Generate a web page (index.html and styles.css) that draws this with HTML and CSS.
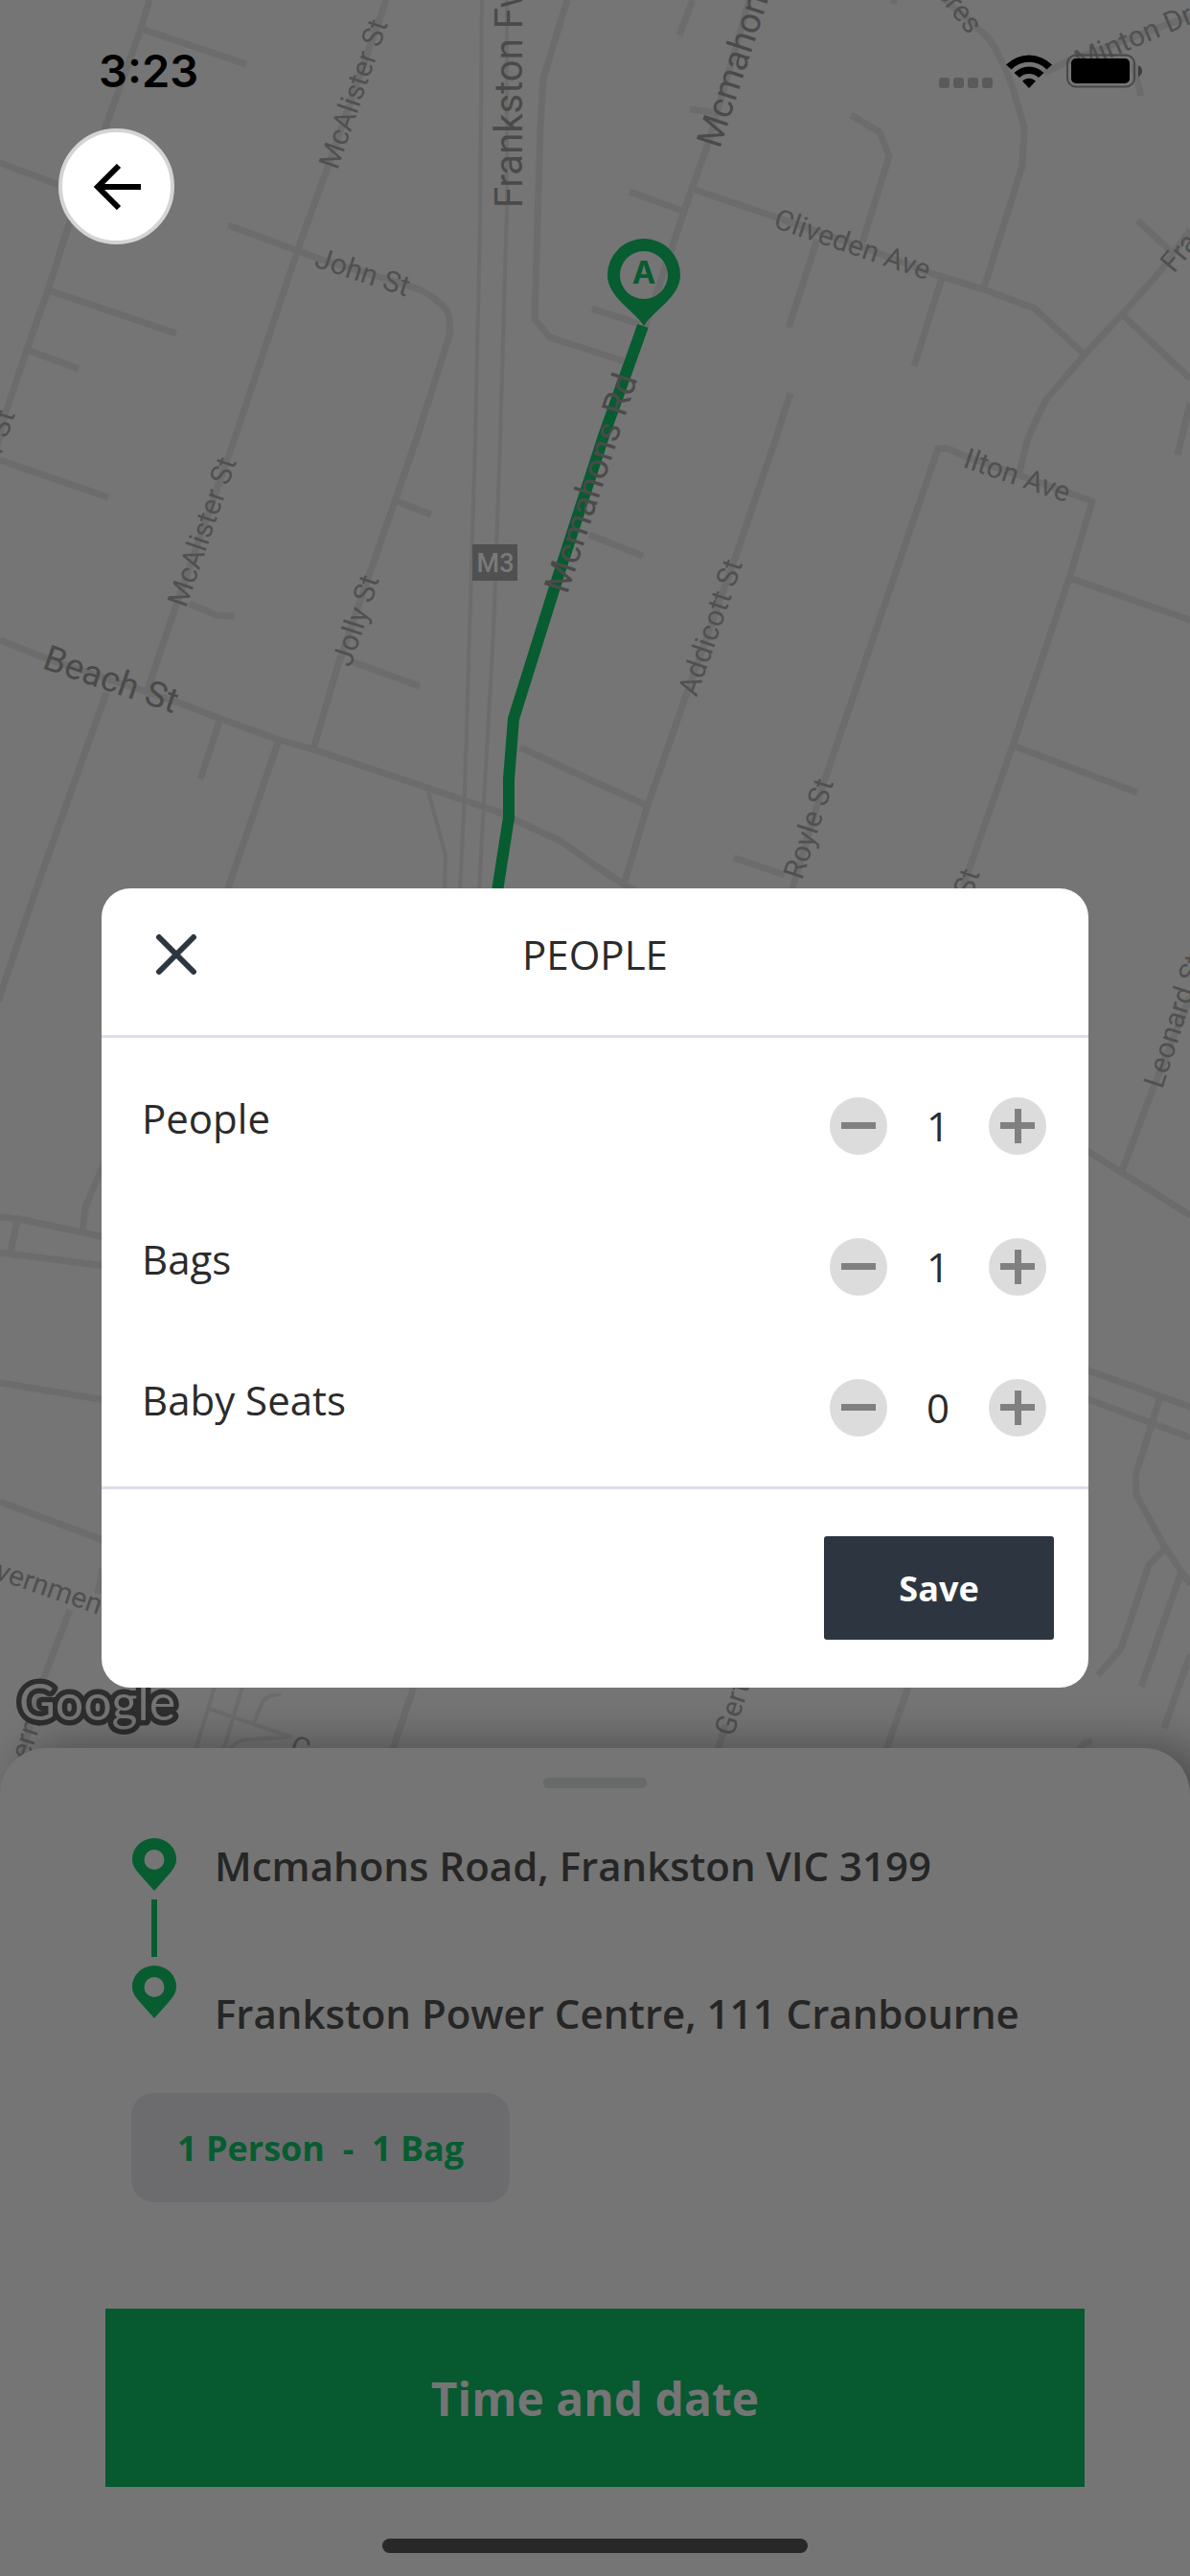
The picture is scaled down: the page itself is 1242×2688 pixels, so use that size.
FILE: index.html
```html
<!DOCTYPE html>
<html lang="en">
<head>
    <meta charset="UTF-8">
    <meta name="viewport" content="width=device-width, initial-scale=1.0">
    <title>Book a ride - People</title>
    <link rel="stylesheet" href="styles.css">
</head>
<body>

    <div class="screen">
        <main class="map">
            <svg class="map-canvas" viewBox="0 0 1242 1880" preserveAspectRatio="xMidYMin slice" role="img" aria-label="Map of Frankston">
                <!-- streets -->
                <g class="road">
                    <path d="M156 0L147 30L110 133L71 237L50 303L28 365L6 430L-4 470"/>
                    <path d="M147 30L257 67M0 170L70 196M51 303L184 348M28 365L82 385M0 480L113 519"/>
                    <path d="M403 0L341 177L311 260L244 460L182 637L154 720"/>
                    <path d="M238 235L333 270L426 298Q448 305 456 314Q468 322 469 333L470 347L434 460L354 690L327 782"/>
                    <path d="M592 0L567 82L564 133L558 333L574 352L651 377M618 322L667 338"/>
                    <path d="M723 0L709 37M782 0L740 147L722 197L672 345M720 114L744 117M657 200L712 220"/>
                    <path d="M722 197L811 227L898 257L971 285L1027 302L1080 322L1132 370"/>
                    <path d="M888 120L918 138L928 163L900 253M853 250L823 342M983 290L954 382"/>
                    <path d="M930 0L936 2M975 -10L1021 30Q1034 40 1040 53Q1052 76 1057 92L1069 133L1067 173L1027 300"/>
                    <path d="M1090 76L1116 63L1242 17M1183 67L1191 100M1187 230L1223 263"/>
                    <path d="M1242 240L1211 283L1171 328L1132 370L1092 417Q1082 436 1072 460L1064 493M1171 328L1242 395M1242 420L1229 475"/>
                    <path d="M825 410L809 460L767 583L718 720L676 840L651 923"/>
                    <path d="M414 523L450 537M198 630L226 642L245 643M366 690L438 716M615 558L671 580"/>
                    <path d="M0 668L48 687L186 733L230 750L291 772L327 782L446 822L519 847L586 878L621 903L651 923L690 945"/>
                    <path d="M111 723L38 927L-2 1045M230 750L209 813M291 772L238 927M543 780L621 816L674 840"/>
                    <path d="M823 940L861 813L979 468L989 468L1007 476L1140 523L1116 603L1057 778L1005 925"/>
                    <path d="M1116 603L1242 647M1057 778L1187 827M766 895L819 913"/>
                    <path d="M110 1210L89 1260L86 1287M0 1270L20 1272L110 1291M0 1307L110 1321M18 1273L11 1307"/>
                    <path d="M0 1443L110 1461M0 1567L110 1608M107 1637L102 1663M73 1680L46 1750L20 1840"/>
                    <path d="M1242 1040L1203 1137L1171 1222M1130 1198L1242 1268M1130 1428L1242 1468M1130 1458L1242 1500"/>
                    <path d="M1211 1457L1185 1540L1186 1560L1215 1613L1233 1640L1242 1653M1215 1617L1199 1633L1170 1720L1146 1748M1233 1640L1191 1760M1242 1727L1215 1803"/>
                    <path d="M432 1760L405 1840M948 1760L920 1840M757 1800L745 1840M1126 1828Q1130 1816 1140 1818"/>
                </g>
                <!-- freeway and narrow lanes -->
                <g class="road lane">
                    <path d="M503 0L501 233L496 460L490 660L485 827L480 930"/>
                    <path d="M529 0L529 217L522 460L515 660L505 837L500 930"/>
                    <path d="M446 822L465 893L464 930"/>
                    <path d="M224 1760L200 1840M253 1760L229 1840M218 1783L305 1813M293 1768Q277 1768 273 1778L265 1797M240 1825Q248 1814 262 1815L300 1813"/>
                </g>

                <path class="route" d="M671 340L630 455L582 603L536 750L531 813L531 853L519 930"/>

                <g class="street">
                    <text transform="translate(352 178) rotate(-71)">McAlister St</text>
                    <text transform="translate(194 635) rotate(-71)">McAlister St</text>
                    <text transform="translate(366 697) rotate(-72)">Jolly St</text>
                    <text transform="translate(327 278) rotate(18)">John St</text>
                    <text transform="translate(727 728) rotate(-71)">Addicott St</text>
                    <text transform="translate(837 919) rotate(-72)">Royle St</text>
                    <text transform="translate(1014 937) rotate(-71)">St</text>
                    <text transform="translate(1213 1137) rotate(-72)">Leonard St</text>
                    <text transform="translate(806 237) rotate(19)">Cliveden Ave</text>
                    <text transform="translate(1004 487) rotate(19)">Ilton Ave</text>
                    <text transform="translate(1127 74) rotate(-23)">Minton Dr</text>
                    <text transform="translate(1225 286) rotate(-50)">Fra</text>
                    <text transform="translate(1011 37) rotate(52)" text-anchor="end">Acres</text>
                    <text transform="translate(16 432) rotate(-71)" text-anchor="end">er St</text>
                    <text transform="translate(-42 1635) rotate(19)">Government</text>
                    <text transform="translate(43 1797) rotate(-72)" text-anchor="end">ern</text>
                    <text transform="translate(301 1830) rotate(19)">George</text>
                    <text transform="translate(765 1813) rotate(-72)">Gertr</text>
                </g>
                <g class="street main-street">
                    <text class="freeway" transform="translate(545 217) rotate(-90)">Frankston Fwy</text>
                    <text transform="translate(751 156) rotate(-72)">Mcmahons</text>
                    <text transform="translate(592 621) rotate(-72)">Mcmahons Rd</text>
                    <text transform="translate(43 697) rotate(19)">Beach St</text>
                </g>

                <rect class="shield" x="493" y="568" width="47" height="38"/>
                <text class="shield-text" x="517" y="597" text-anchor="middle">M3</text>

                <!-- pickup pin -->
                <path class="pin" fill-rule="evenodd" d="M672 340C662 324 634 310 634 287A38 38 0 0 1 710 287C710 310 682 324 672 340ZM672 262A25 25 0 1 0 672 312A25 25 0 1 0 672 262Z"/>
                <text class="pin-text" x="672" y="296" text-anchor="middle">A</text>

                <text class="google" x="20" y="1795">Google</text>
            </svg>

            <header class="status">
                <span class="time">3:23</span>
                <svg class="status-icons" width="214" height="36" viewBox="0 0 214 36" aria-hidden="true">
                    <g fill="#5a5a5a">
                        <rect x="0" y="25" width="11" height="11" rx="3"/>
                        <rect x="15" y="25" width="11" height="11" rx="3"/>
                        <rect x="30" y="25" width="11" height="11" rx="3"/>
                        <rect x="45" y="25" width="11" height="11" rx="3"/>
                    </g>
                    <path d="M70 11.500A34 34 0 0 1 118 11.500L112.500 16.500A26 26 0 0 0 75.500 16.500Z"/>
                    <path d="M78.500 20A22 22 0 0 1 109.500 20L104 25A14.500 14.500 0 0 0 84 25Z"/>
                    <path d="M87 28.500A10 10 0 0 1 101 28.500L94 36Z"/>
                    <rect x="134" y="1.500" width="70" height="33" rx="9" fill="none" stroke="#484848" stroke-width="2"/>
                    <rect x="138" y="5" width="61" height="26" rx="5"/>
                    <path d="M208 12Q212 14 212 18T208 24Z" fill="#3c3c3c"/>
                </svg>
            </header>

            <button class="back" type="button" aria-label="Back">
                <svg width="50" height="48" viewBox="0 0 50 48" fill="none" stroke="#000" stroke-width="6" aria-hidden="true">
                    <path d="M27 2L5 24L27 46M5 24H50"/>
                </svg>
            </button>
        </main>

        <section class="sheet">
            <div class="handle"></div>

            <div class="trip">
                <div class="trip-icons">
                    <svg class="pin" width="46" height="55" viewBox="0 0 46 55" aria-hidden="true">
                        <path fill-rule="evenodd" d="M23 55L7 37C3 32 0 28 0 22A23 22 0 0 1 46 22C46 28 43 32 39 37ZM23 12A10.500 10.500 0 1 0 23 33A10.500 10.500 0 1 0 23 12Z"/>
                    </svg>
                    <div class="trip-line"></div>
                    <svg class="pin" width="46" height="55" viewBox="0 0 46 55" aria-hidden="true">
                        <path fill-rule="evenodd" d="M23 55L7 37C3 32 0 28 0 22A23 22 0 0 1 46 22C46 28 43 32 39 37ZM23 12A10.500 10.500 0 1 0 23 33A10.500 10.500 0 1 0 23 12Z"/>
                    </svg>
                </div>
                <div class="trip-places">
                    <p>Mcmahons Road, Frankston VIC 3199</p>
                    <p>Frankston Power Centre, 111 Cranbourne</p>
                </div>
            </div>

            <button class="chip" type="button">1 Person &nbsp;-&nbsp; 1 Bag</button>
            <button class="next" type="button">Time and date</button>
            <div class="home-bar"></div>
        </section>
    </div>

    <div class="overlay">
        <form class="modal" role="dialog" aria-labelledby="modal-title">
            <div class="modal-head">
                <button class="close" type="button" aria-label="Close">
                    <svg width="44" height="44" viewBox="0 0 44 44" fill="none" stroke="#2d3640" stroke-width="6" stroke-linecap="round" aria-hidden="true">
                        <path d="M4 4L40 40M40 4L4 40"/>
                    </svg>
                </button>
                <h1 id="modal-title">PEOPLE</h1>
            </div>

            <div class="modal-body">
                <div class="row">
                    <label for="people">People</label>
                    <div class="counter">
                        <button class="step minus" type="button" aria-label="Fewer people"></button>
                        <output id="people">1</output>
                        <button class="step plus" type="button" aria-label="More people"></button>
                    </div>
                </div>
                <div class="row">
                    <label for="bags">Bags</label>
                    <div class="counter">
                        <button class="step minus" type="button" aria-label="Fewer bags"></button>
                        <output id="bags">1</output>
                        <button class="step plus" type="button" aria-label="More bags"></button>
                    </div>
                </div>
                <div class="row">
                    <label for="seats">Baby Seats</label>
                    <div class="counter">
                        <button class="step minus" type="button" aria-label="Fewer baby seats"></button>
                        <output id="seats">0</output>
                        <button class="step plus" type="button" aria-label="More baby seats"></button>
                    </div>
                </div>
            </div>

            <div class="modal-foot">
                <button class="save" type="button">Save</button>
            </div>
        </form>
    </div>

</body>
</html>
```
FILE: styles.css
```css
* {
    box-sizing: border-box;
}

body {
    margin: 0;
    font-family: "Open Sans", sans-serif;
    font-size: 42px;
    line-height: 58px;
    color: #2b2b2b;
    background-color: #757575;
}

h1, p {
    margin: 0;
}

button {
    padding: 0;
    border: none;
    background: none;
    font-family: inherit;
    cursor: pointer;
}

svg {
    display: block;
}

.screen {
    display: flex;
    flex-direction: column;
    min-height: 100vh;
}

/* Map */
.map {
    position: relative;
    flex: 1;
    min-height: 500px;
}

/* runs a little under the rounded corners of the sheet */
.map-canvas {
    position: absolute;
    top: 0;
    left: 0;
    width: 100%;
    height: calc(100% + 56px);
}

.road {
    fill: none;
    stroke: #6c6c6c;
    stroke-width: 7;
    stroke-linejoin: round;
}

.lane {
    stroke-width: 4;
}

.route {
    fill: none;
    stroke: #075c30;
    stroke-width: 12;
    stroke-linejoin: round;
}

.street {
    fill: #505050;
    font-family: Roboto, sans-serif;
    font-size: 30px;
}

.main-street {
    fill: #4a4a4a;
    font-size: 37px;
}

.freeway {
    font-size: 40px;
}

.shield {
    fill: #505050;
}

.shield-text {
    fill: #7a7a7a;
    font-family: Roboto, sans-serif;
    font-size: 27px;
    font-weight: 500;
}

.pin {
    fill: #075c30;
}

.pin-text {
    fill: #075c30;
    font-family: Inter, sans-serif;
    font-size: 33px;
    font-weight: 700;
}

.google {
    fill: #757575;
    stroke: #2e2e2e;
    stroke-width: 11;
    stroke-linejoin: round;
    paint-order: stroke;
    font-family: Lato, sans-serif;
    font-size: 52px;
}

.status {
    position: relative;
    display: flex;
    justify-content: space-between;
    align-items: center;
    padding: 45px 48px 0 103px;
}

.time {
    color: #000;
    font-family: Inter, sans-serif;
    font-size: 47px;
    font-weight: 600;
}

.back {
    position: relative;
    display: flex;
    align-items: center;
    justify-content: center;
    width: 121px;
    height: 121px;
    margin: 31px 0 0 61px;
    border: 4px solid #d4d4d4;
    border-radius: 50%;
    background-color: #fff;
}

/* Bottom sheet */
.sheet {
    position: relative;
    display: flex;
    flex-direction: column;
    padding: 31px 110px 24px;
    border-radius: 48px 48px 0 0;
    background-color: #757575;
    box-shadow: 20px 0 50px rgba(0, 0, 0, 0.4);
}

.handle {
    align-self: center;
    width: 108px;
    height: 11px;
    border-radius: 5px;
    background-color: #676a69;
}

.trip {
    display: flex;
    gap: 40px;
    margin: 52px 0 54px 28px;
    color: #262626;
    font-weight: 600;
}

.trip-icons {
    display: flex;
    flex-direction: column;
    align-items: center;
    gap: 9px;
}

.trip-line {
    width: 6px;
    height: 60px;
    background-color: #075c30;
}

.trip-places {
    display: flex;
    flex-direction: column;
    gap: 96px;
}

.chip {
    align-self: flex-start;
    height: 114px;
    margin-left: 27px;
    padding: 0 48px;
    border-radius: 24px;
    background-color: #6c6c6f;
    color: #075c30;
    font-size: 36px;
    font-weight: 700;
}

.next {
    height: 186px;
    margin: 111px 0 54px;
    background-color: #07592f;
    color: #757575;
    font-size: 48px;
    font-weight: 700;
}

.home-bar {
    align-self: center;
    width: 444px;
    height: 15px;
    border-radius: 8px;
    background-color: #282828;
}

/* Modal */
.overlay {
    position: fixed;
    inset: 0;
    display: flex;
    align-items: center;
    padding: 0 106px;
}

.modal {
    flex: 1;
    border-radius: 30px;
    background-color: #fff;
}

.modal-head {
    display: grid;
    grid-template-columns: 44px 1fr 44px;
    align-items: center;
    padding: 40px 56px 55px;
    border-bottom: 3px solid #dcdeea;
}

.modal-head h1 {
    font-size: 42px;
    font-weight: 400;
    text-align: center;
}

.modal-body {
    padding: 18px 44px 9px 42px;
    border-bottom: 3px solid #dcdeea;
}

.row {
    display: flex;
    align-items: center;
    justify-content: space-between;
    height: 147px;
}

.row label {
    padding-bottom: 16px;
}

.counter {
    display: flex;
    align-items: center;
}

.counter output {
    width: 106px;
    text-align: center;
}

.step {
    width: 60px;
    height: 60px;
    border-radius: 50%;
    background-color: #dcdcdc;
    background-repeat: no-repeat;
    background-position: center;
}

.minus {
    background-image: linear-gradient(#808080, #808080);
    background-size: 36px 7px;
}

.plus {
    background-image: linear-gradient(#808080, #808080), linear-gradient(#808080, #808080);
    background-size: 36px 7px, 7px 36px;
}

.modal-foot {
    display: flex;
    justify-content: flex-end;
    padding: 49px 36px 50px;
}

.save {
    width: 240px;
    height: 108px;
    border-radius: 3px;
    background-color: #2d3640;
    color: #fff;
    font-size: 36px;
    font-weight: 700;
}
```
